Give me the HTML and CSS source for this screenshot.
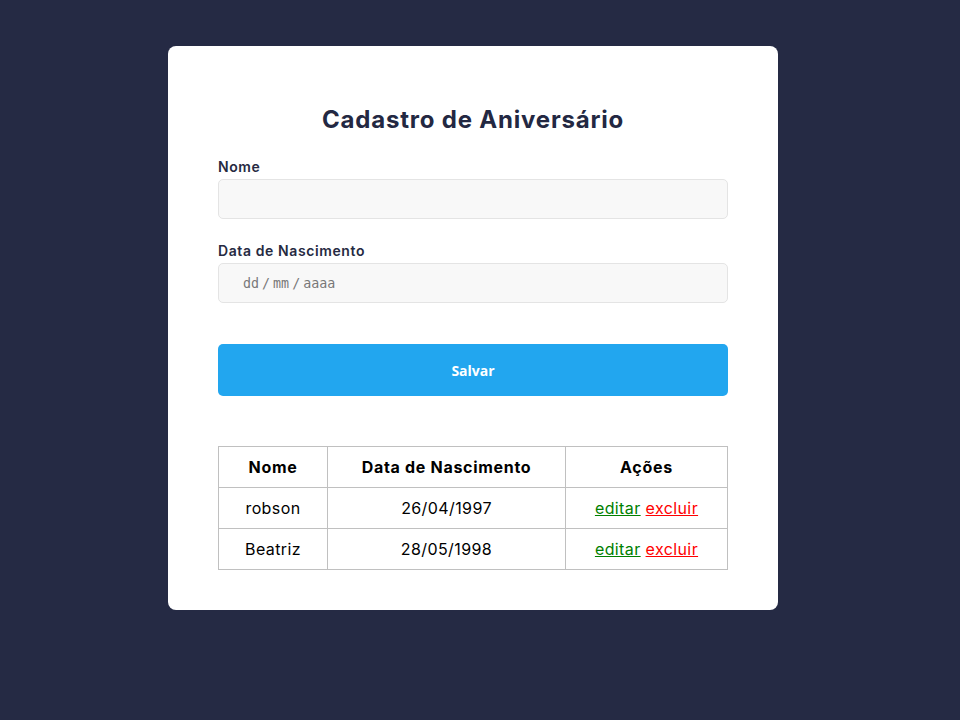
FILE: index.html
```html
<!DOCTYPE html>
<html lang="pt-BR">
<head>
<meta charset="utf-8">
<title>Cadastro de Aniversário</title>
<link rel="stylesheet" href="styles.css">
</head>
<body>
<main class="card">
  <h1 class="title">Cadastro de Aniversário</h1>
  <form class="form">
    <label class="label" for="nome">Nome</label>
    <div class="input" id="nome"></div>
    <label class="label label-gap" for="data">Data de Nascimento</label>
    <div class="input input-date" id="data">
      <span>dd</span><span class="sep">/</span><span>mm</span><span class="sep">/</span><span>aaaa</span>
    </div>
    <button type="button" class="btn">Salvar</button>
  </form>
  <table class="table">
    <colgroup>
      <col class="c1"><col class="c2"><col class="c3">
    </colgroup>
    <thead>
      <tr><th>Nome</th><th>Data de Nascimento</th><th>Ações</th></tr>
    </thead>
    <tbody>
      <tr><td>robson</td><td>26/04/1997</td><td><a class="edit" href="#">editar</a> <a class="del" href="#">excluir</a></td></tr>
      <tr><td>Beatriz</td><td>28/05/1998</td><td><a class="edit" href="#">editar</a> <a class="del" href="#">excluir</a></td></tr>
    </tbody>
  </table>
</main>
</body>
</html>
```

FILE: styles.css
```css
html, body {
  margin: 0;
  padding: 0;
}
body {
  background: #252a44;
  font-family: Inter, "Noto Sans", sans-serif;
  min-height: 720px;
  padding-top: 46px;
  padding-left: 168px;
  box-sizing: border-box;
}
.card {
  width: 510px;
  background: #ffffff;
  border-radius: 8px;
  padding: 50px 50px 40px;
}
.title {
  margin: 0;
  height: 48px;
  line-height: 48px;
  text-align: center;
  font-size: 24px;
  font-weight: 700;
  letter-spacing: 0.8px;
  color: #232842;
}
.form {
  display: flex;
  flex-direction: column;
  margin-top: 14px;
}
.label {
  display: block;
  height: 18px;
  line-height: 18px;
  font-size: 14px;
  font-weight: 600;
  letter-spacing: 0.6px;
  color: #262a42;
  margin-bottom: 3px;
}
.label-gap {
  margin-top: 23px;
}
.input {
  box-sizing: border-box;
  height: 40px;
  background: #f8f8f8;
  border: 1px solid #e4e4e4;
  border-radius: 5px;
}
.input-date {
  display: flex;
  align-items: center;
  padding-left: 24px;
  font-family: "DejaVu Sans Mono", monospace;
  font-size: 13.33px;
  color: #787878;
  gap: 3px;
}
.btn {
  margin-top: 41px;
  height: 52px;
  border: none;
  border-radius: 5px;
  background: #22a6ef;
  color: #ffffff;
  font-family: "Open Sans", sans-serif;
  font-weight: 700;
  font-size: 14px;
}
.table {
  margin-top: 50px;
  width: 509px;
  border-collapse: collapse;
  table-layout: fixed;
  font-size: 16px;
  color: #000000;
}
.c1 { width: 109px; }
.c2 { width: 238px; }
.c3 { width: 162px; }
.table th, .table td {
  border: 1px solid #c0c0c0;
  height: 40px;
  padding: 0;
  text-align: center;
  vertical-align: middle;
}
.table th {
  font-weight: 700;
  letter-spacing: 0.7px;
}
.table td {
  font-weight: 400;
  letter-spacing: 0.4px;
}
.edit { color: #008000; }
.del { color: #ff0000; }
```
